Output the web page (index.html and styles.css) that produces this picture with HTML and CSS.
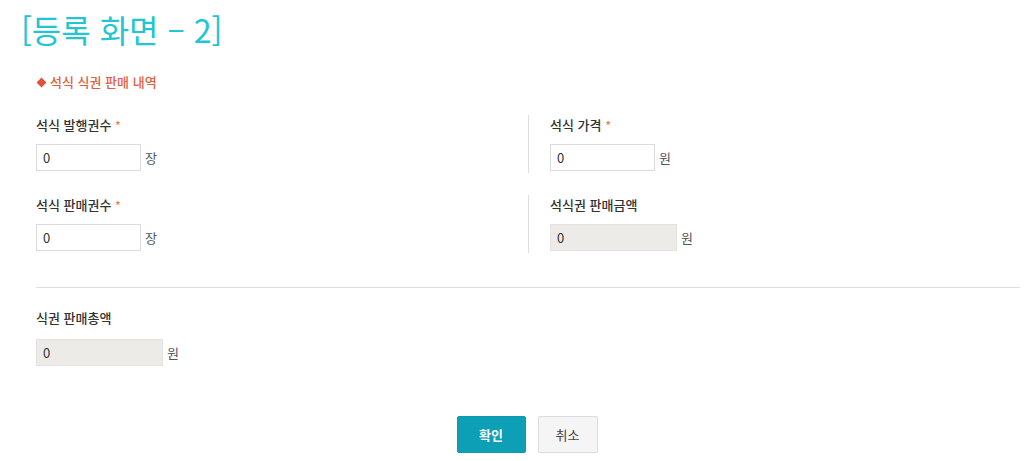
FILE: index.html
```html
<!DOCTYPE html>
<html lang="ko">
<head>
<meta charset="utf-8">
<link rel="stylesheet" href="styles.css">
</head>
<body>
<h1 class="title">[등록 화면 – 2]</h1>
<div class="form">
  <h2 class="section-title"><span class="diamond"></span>석식 식권 판매 내역</h2>
  <div class="grid">
    <div class="cell">
      <div class="label">석식 발행권수 <span class="req">*</span></div>
      <div class="field"><input class="input" type="text" value="0"><span class="unit">장</span></div>
    </div>
    <div class="cell cell-right">
      <div class="label">석식 가격 <span class="req">*</span></div>
      <div class="field"><input class="input" type="text" value="0"><span class="unit">원</span></div>
    </div>
    <div class="cell">
      <div class="label">석식 판매권수 <span class="req">*</span></div>
      <div class="field"><input class="input" type="text" value="0"><span class="unit">장</span></div>
    </div>
    <div class="cell cell-right">
      <div class="label">석식권 판매금액</div>
      <div class="field"><input class="input input-ro" type="text" value="0" readonly><span class="unit">원</span></div>
    </div>
  </div>
  <hr class="divider">
  <div class="total">
    <div class="label">식권 판매총액</div>
    <div class="field"><input class="input input-ro" type="text" value="0" readonly><span class="unit">원</span></div>
  </div>
  <div class="buttons">
    <button class="btn btn-primary">확인</button>
    <button class="btn btn-cancel">취소</button>
  </div>
</div>
</body>
</html>
```
FILE: styles.css
```css
* { box-sizing: border-box; }
html, body {
  margin: 0;
  padding: 0;
  background: #fff;
  font-family: "Noto Sans CJK KR", "Noto Sans", sans-serif;
  color: #333;
}
.title {
  margin: 9px 0 0 21px;
  height: 41px;
  font-size: 32px;
  line-height: 41px;
  font-weight: 400;
  color: #22c6d2;
  letter-spacing: 0;
}
.form {
  padding: 0 4px 0 36px;
}
.section-title {
  margin: 22px 0 0 0;
  font-size: 13px;
  line-height: 20px;
  font-weight: 500;
  color: #e0603f;
  display: flex;
  align-items: center;
}
.diamond {
  width: 7px;
  height: 7px;
  background: #e0533a;
  transform: rotate(45deg);
  margin: 0 5px 0 2px;
}
.grid {
  margin-top: 23px;
  display: grid;
  grid-template-columns: 492px 1fr;
  row-gap: 22px;
}
.cell {
  height: 58px;
}
.cell-right {
  border-left: 1px solid #dedede;
  padding-left: 21px;
}
.label {
  font-size: 13px;
  line-height: 20px;
  height: 20px;
  font-weight: 500;
  color: #333;
}
.req {
  color: #f07c50;
  font-size: 12px;
}
.field {
  margin-top: 9px;
  display: flex;
  align-items: center;
}
.input {
  width: 105px;
  height: 27px;
  border: 1px solid #dcdcdc;
  background: #fff;
  padding: 0 6px;
  font-family: "Noto Sans CJK KR", "Noto Sans", sans-serif;
  font-size: 13px;
  color: #333;
  outline: none;
  margin: 0;
}
.input-ro {
  width: 127px;
  background: #ecebe7;
  border-color: #e3e2de;
}
.unit {
  margin-left: 4px;
  font-size: 13px;
  color: #555;
}
.divider {
  margin: 34px 0 0 0;
  border: 0;
  border-top: 1px solid #dedede;
  height: 0;
}
.total {
  margin-top: 20px;
}
.total .field {
  margin-top: 11px;
}
.buttons {
  margin-top: 50px;
  display: flex;
  justify-content: center;
  gap: 12px;
  padding-right: 2px;
}
.btn {
  height: 37px;
  font-family: "Noto Sans CJK KR", "Noto Sans", sans-serif;
  font-size: 13px;
  border-radius: 2px;
  cursor: pointer;
  padding: 0;
}
.btn-primary {
  width: 69px;
  background: #0d9fb5;
  border: 1px solid #0d9ab0;
  color: #fff;
  font-weight: 700;
}
.btn-cancel {
  width: 60px;
  background: #f5f5f5;
  border: 1px solid #dcdcdc;
  color: #444;
}
```
